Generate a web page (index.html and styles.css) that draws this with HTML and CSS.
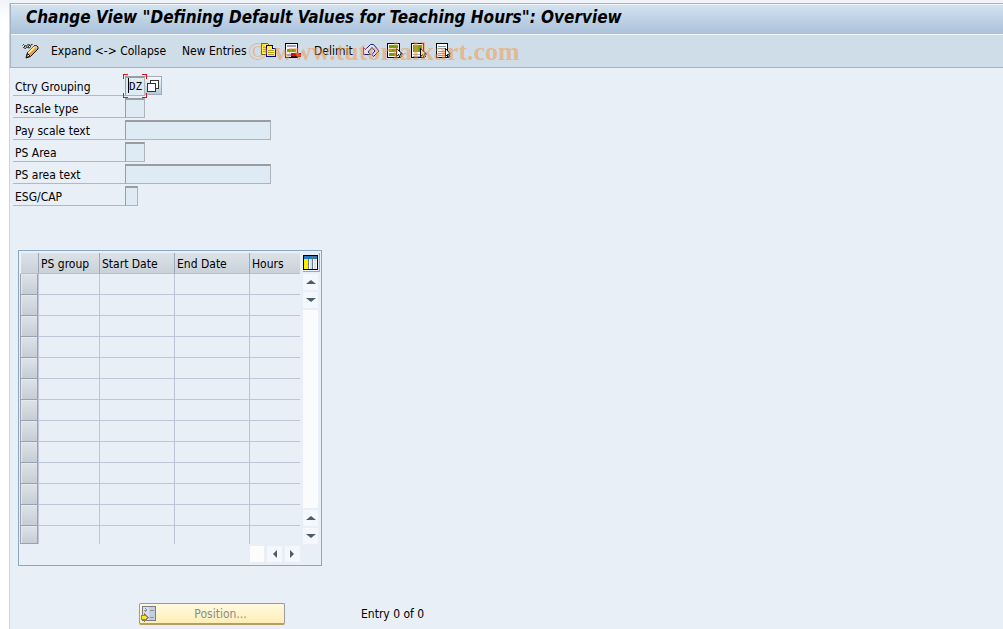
FILE: index.html
```html
<!DOCTYPE html>
<html lang="en">
<head>
<meta charset="utf-8">
<title>Change View "Defining Default Values for Teaching Hours": Overview</title>
<link rel="stylesheet" href="styles.css">
</head>
<body>
<main class="app">
  <header class="head">
    <h1 class="title">Change View "Defining Default Values for Teaching Hours": Overview</h1>
    <div class="toolbar">
      <button class="tool" aria-label="Display or change"><svg width="17" height="16" viewBox="0 0 17 16"><path d="M.5 2.500l1-1 1 1M1.500 4.500l2 1 1-1.500-1-1.500zM4.500 3l2-2 1 1M5.500 4.500l2 .5 1-1.500-1-1.500zM8.500 2l2-.5" fill="#fff" stroke="#111"/><path d="M5.500 9.500l7-7h2l1.500 1.500v2l-7.500 7.500-4.500 1.500z" fill="#f39a2c" stroke="#111"/><path d="M12.500 3.500l1-1 2 2-1 1.500z" fill="#c9c9f2"/><path d="M6.500 10l6-6" stroke="#fff3a0" stroke-width="2"/><path d="M4.500 14.500l1-4 2.500 2.500z" fill="#fff" stroke="#111"/></svg></button>
      <button class="tool-text wide">Expand &lt;-&gt; Collapse</button>
      <button class="tool-text mid">New Entries</button>
      <button class="tool" aria-label="Copy as"><svg width="16" height="16" viewBox="0 0 16 16" shape-rendering="crispEdges"><path d="M.5.5h6l3 3v8h-9z" fill="#ffec3d" stroke="#776c00"/><path d="M2 4h5M2 6h5M2 8h5" stroke="#b0a428"/><path d="M5.500 2.500h6l3 3v8h-9z" fill="#fff033" stroke="#00008b"/><path d="M11.500 2.500v3h3" fill="#fff" stroke="#00008b"/><path d="M7 7.500h6M7 9.500h6M7 11.500h6" stroke="#b0a428"/></svg></button>
      <button class="tool" aria-label="Delete"><svg width="16" height="16" viewBox="0 0 16 16" shape-rendering="crispEdges"><path d="M.5.5h12v14H.5z" fill="#fff" stroke="#000"/><path d="M2 3h9" stroke="#9c9cd0" stroke-width="2"/><path d="M2 6h9v3H2z" fill="#8a9a00"/><path d="M2 12h4" stroke="#9c9cd0" stroke-width="2"/><path d="M6 10h10v3H6z" fill="#e30c0c"/><path d="M6 13h10v1H6z" fill="#400"/></svg></button>
      <button class="tool-text slim">Delimit</button>
      <button class="tool" aria-label="Undo"><svg width="17" height="16" viewBox="0 0 17 16"><path d="M.5 4.500v7h7l-2.500-2.500 4-4.500 3 3.500-3 3.500 1.500 2 5.500-5.500-5.500-6.500h-3l-5 5z" fill="#e6e4f0" stroke="#17178c"/></svg></button>
      <button class="tool" aria-label="Select all"><svg width="16" height="16" viewBox="0 0 16 16"><g shape-rendering="crispEdges"><path d="M.5.5h12v14H.5z" fill="#fff" stroke="#000"/><path d="M2 2h9v3H2zM2 6h9v3H2zM2 10h9v3H2z" fill="#779d00"/></g><path d="M9.500 5.500v8l2-2 1.500 3 1.500-1-1.500-2.500h2.500z" fill="#fff" stroke="#000"/></svg></button>
      <button class="tool" aria-label="Select block"><svg width="16" height="16" viewBox="0 0 16 16"><g shape-rendering="crispEdges"><path d="M.5.5h12v14H.5z" fill="#fff" stroke="#000"/><path d="M2 2h9v7H2z" fill="#779d00"/><path d="M2 11.500h9M2 13.500h9" stroke="#98aabc"/></g><path d="M9.500 5.500v8l2-2 1.500 3 1.500-1-1.500-2.500h2.500z" fill="#fff" stroke="#000"/></svg></button>
      <button class="tool" aria-label="Deselect all"><svg width="16" height="16" viewBox="0 0 16 16"><g shape-rendering="crispEdges"><path d="M1.500.5h11v14h-11z" fill="#fff" stroke="#000"/><path d="M3 3.500h8M3 5.500h8M3 8.500h8M3 10.500h8M3 12.500h8" stroke="#7d9db5"/></g><path d="M10.500 5.500v8l2-2 1 3 1.500-1-1.500-2.500h2z" fill="#fff" stroke="#000"/></svg></button>
      <span class="watermark"><span class="copy">©</span> www.tutorialkart.com</span>
    </div>
  </header>
  <form class="fields">
    <div class="field"><label for="ctry">Ctry Grouping</label><span class="focus"><input class="two" id="ctry" value="DZ"><i class="caret"></i><i class="corner tl"></i><i class="corner tr"></i><i class="corner bl"></i><i class="corner br"></i></span><button type="button" class="help" aria-label="Possible entries"><svg width="12" height="12" viewBox="0 0 12 12" shape-rendering="crispEdges"><path d="M3.500 3V.5h8v8H9" fill="#fff" stroke="#333"/><path d="M.5 3.500h8v8h-8z" fill="#fff" stroke="#333"/></svg></button></div>
    <div class="field"><label for="ptype">P.scale type</label><input class="two" id="ptype"></div>
    <div class="field"><label for="ptext">Pay scale text</label><input class="long" id="ptext"></div>
    <div class="field"><label for="area">PS Area</label><input class="two" id="area"></div>
    <div class="field"><label for="atext">PS area text</label><input class="long" id="atext"></div>
    <div class="field"><label for="esg">ESG/CAP</label><input class="one" id="esg"></div>
  </form>
  <section class="grid">
    <table class="rows">
      <thead><tr><th class="sel"></th><th class="group">PS group</th><th class="date">Start Date</th><th class="date">End Date</th><th class="hours">Hours</th></tr></thead>
      <tbody>
        <tr><td class="sel"></td><td></td><td></td><td></td><td></td></tr>
        <tr><td class="sel"></td><td></td><td></td><td></td><td></td></tr>
        <tr><td class="sel"></td><td></td><td></td><td></td><td></td></tr>
        <tr><td class="sel"></td><td></td><td></td><td></td><td></td></tr>
        <tr><td class="sel"></td><td></td><td></td><td></td><td></td></tr>
        <tr><td class="sel"></td><td></td><td></td><td></td><td></td></tr>
        <tr><td class="sel"></td><td></td><td></td><td></td><td></td></tr>
        <tr><td class="sel"></td><td></td><td></td><td></td><td></td></tr>
        <tr><td class="sel"></td><td></td><td></td><td></td><td></td></tr>
        <tr><td class="sel"></td><td></td><td></td><td></td><td></td></tr>
        <tr><td class="sel"></td><td></td><td></td><td></td><td></td></tr>
        <tr><td class="sel"></td><td></td><td></td><td></td><td></td></tr>
        <tr><td class="sel"></td><td></td><td></td><td></td><td></td></tr>
      </tbody>
    </table>
    <div class="vbar">
      <button class="config" aria-label="Table settings"><svg width="15" height="15" viewBox="0 0 15 15" shape-rendering="crispEdges"><path d="M.5.5h14v14H.5z" fill="#fff" stroke="#000"/><path d="M1 1h13v3H1z" fill="#2877bd"/><path d="M1 4h4v10H1z" fill="#ffed00"/><path d="M7 4h2v10H7zM11 4h2v10h-2z" fill="#d5e0e8"/><path d="M5.500 4v10M9.500 1v13" stroke="#68798a"/></svg></button>
      <button class="arrow" aria-label="Scroll up"><svg width="10" height="6"><path d="M0 5l5-4 5 4z"/></svg></button>
      <button class="arrow" aria-label="Page down"><svg width="10" height="6"><path d="M0 1l5 4 5-4z"/></svg></button>
      <div class="track"></div>
      <button class="arrow" aria-label="Page up"><svg width="10" height="6"><path d="M0 5l5-4 5 4z"/></svg></button>
      <button class="arrow" aria-label="Scroll down"><svg width="10" height="6"><path d="M0 1l5 4 5-4z"/></svg></button>
    </div>
    <div class="hbar">
      <div class="thumb"></div>
      <button class="arrow" aria-label="Scroll left"><svg width="6" height="10"><path d="M5 1L1 5l4 4z"/></svg></button>
      <button class="arrow" aria-label="Scroll right"><svg width="6" height="10"><path d="M0 1l4 4-4 4z"/></svg></button>
    </div>
  </section>
  <footer class="foot">
    <button class="position"><svg width="16" height="16" viewBox="0 0 16 16" shape-rendering="crispEdges"><path d="M1.500.5h13v14h-13z" fill="#d9e0ea" stroke="#777c88"/><path d="M8 1h6v13H8z" fill="#c5cee0"/><path d="M3 4h3M9 4h4M9 11h4M4 2l2 2-2 2" fill="none" stroke="#8a90a0"/><path d="M0 9.500h3v-2l4 4-4 4v-2H0z" fill="#ffe534" stroke="#9c8730"/></svg><span>Position...</span></button>
    <span>Entry 0 of 0</span>
  </footer>
</main>
</body>
</html>
```
FILE: styles.css
```css
* { box-sizing: border-box; }
body {
  margin: 0;
  padding: 3px 0 0 9px;
  min-height: 100vh;
  display: flex;
  background: linear-gradient(#eef3f9, #fff 20px);
  color: #000;
  font: 12px/16px "DejaVu Sans Condensed", "Noto Sans", sans-serif;
}
button, input { font: inherit; color: inherit; padding: 0; border: 0; background: none; outline: 0; }
svg { display: block; flex: none; }
.app { flex: 1; background: #e8eff6; border-left: 1px solid #c9d6e8; }
.head { border: 1px solid #a3b4c5; border-right: 0; }
.title {
  margin: 0;
  padding: 0 15px 4px;
  font-size: 17px;
  line-height: 25px;
  font-style: italic;
  white-space: nowrap;
  background: linear-gradient(#d3e2ee, #a9c1db);
  border-top: 1px solid #f2f6fa;
}
.toolbar {
  position: relative;
  display: flex;
  align-items: center;
  height: 33px;
  padding-left: 11px;
  border-top: 1px solid #f2f6fa;
  background: #cfdde8;
}
.tool { width: 24px; height: 16px; }
.tool-text { padding: 0 5px; text-align: left; white-space: nowrap; }
.wide { width: 131px; }
.mid { width: 84px; }
.slim { width: 54px; }
.watermark {
  position: absolute;
  left: 237px;
  top: 3px;
  font: bold 26px/28px "Liberation Serif", serif;
  color: rgba(240, 155, 80, .55);
  white-space: nowrap;
  pointer-events: none;
}
.copy { font-weight: normal; }
.fields { display: flex; flex-direction: column; gap: 2px; padding: 8px 0 0 3px; }
.field { display: flex; height: 20px; }
.field label { width: 112px; padding: 3px 2px 0; border-bottom: 1px solid #b4b8bc; }
.field input { height: 20px; background: #deeaf4; border: 1px solid #b0b4b8; border-top: 2px solid #999da1; border-left-color: #999da1; }
.two { width: 20px; }
.one { width: 13px; }
.long { width: 146px; }
.focus { position: relative; font: 11px/16px "DejaVu Sans Mono", monospace; }
.focus input { padding-left: 3px; display: block; }
.caret { position: absolute; left: 3px; top: 2px; width: 1px; height: 15px; background: #000; }
.corner { position: absolute; width: 5px; height: 5px; border: 0 solid #dc1420; }
.tl { left: -2px; top: -2px; border-width: 1px 0 0 1px; }
.tr { right: -2px; top: -2px; border-width: 1px 1px 0 0; }
.bl { left: -2px; bottom: -2px; border-width: 0 0 1px 1px; }
.br { right: -2px; bottom: -2px; border-width: 0 1px 1px 0; }
.help { width: 17px; height: 19px; padding: 2px; border: 1px solid #a4abb3; border-left: 0; background: linear-gradient(#f6f9fc, #b5c8de); }
.grid {
  display: grid;
  grid-template-columns: 280px 16px;
  column-gap: 3px;
  row-gap: 2px;
  width: max-content;
  margin: 44px 0 0 8px;
  padding: 2px 2px 3px 1px;
  border: 1px solid #8aa7c4;
}
.rows { border-collapse: separate; border-spacing: 0; table-layout: fixed; width: 280px; }
.rows th { height: 21px; padding: 2px 0 0 2px; font-weight: normal; text-align: left; white-space: nowrap; background: linear-gradient(#dce2e7, #c9d1d9); border-left: 1px solid #9da9b7; border-bottom: 1px solid #b6bfcc; }
.rows td { height: 21px; padding: 0; border-left: 1px solid #bdc6d6; border-bottom: 1px solid #bdc6d6; }
.rows tr:last-child td { height: 18px; border-bottom: 0; }
.rows th.sel { width: 18px; border-left: 1px solid #f2f5f8; }
.rows tbody td.sel { border: 1px solid #98a3b1; border-top: 0; background: linear-gradient(#dfe3e7, #c7cdd5); box-shadow: inset 1px 1px #e5e9ed; }
.group { width: 61px; }
.date { width: 75px; }
.hours { width: 51px; }
.vbar { display: flex; flex-direction: column; gap: 2px; }
.config { width: 17px; height: 19px; border-right: 1px solid #9da9b7; border-bottom: 1px solid #9da9b7; }
.arrow { display: flex; align-items: center; justify-content: center; width: 15px; height: 16px; background: #f4f7fb; fill: #4b5d6c; }
.track { flex: 1; width: 15px; background: #fafbfc; }
.hbar { display: flex; justify-content: flex-end; gap: 3px; }
.thumb { width: 14px; height: 16px; background: #fcfcfd; }
.foot { display: flex; align-items: center; gap: 76px; padding: 37px 0 4px 129px; }
.position { display: flex; align-items: center; width: 146px; height: 22px; padding-left: 1px; color: #8c8c8c; border: 1px solid #9a9a98; border-bottom: 2px solid #b49e60; border-radius: 2px; background: linear-gradient(#fff9df, #feeeb6); }
.position span { flex: 1; text-align: center; }
```
